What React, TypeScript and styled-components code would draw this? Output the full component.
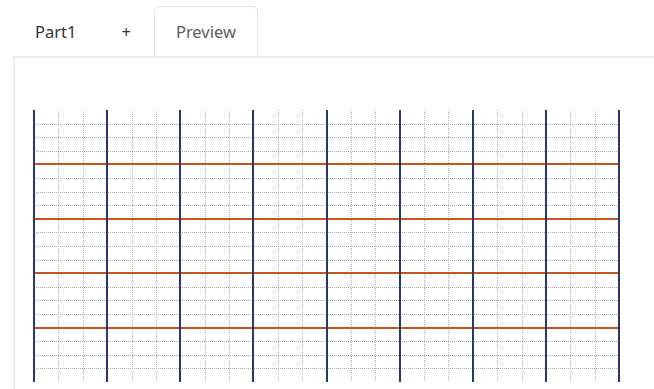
import React from "react";
import styled, { createGlobalStyle } from "styled-components";

const Global = createGlobalStyle`
  html, body { margin: 0; padding: 0; background: #ffffff; }
  body { font-family: "Noto Sans", "Open Sans", Arial, sans-serif; overflow: hidden; }
`;

const Page = styled.div`
  width: 654px;
  height: 389px;
  overflow: hidden;
  background: #fff;
`;

const TabBar = styled.div`
  display: flex;
  align-items: flex-end;
  padding: 6px 0 0 13px;
  height: 56px;
  box-sizing: border-box;
`;

const Tab = styled.div<{ $active?: boolean; $pad: number }>`
  height: 50px;
  box-sizing: border-box;
  display: flex;
  align-items: center;
  padding: 0 ${(p) => p.$pad}px;
  font-size: 16.5px;
  color: ${(p) => (p.$active ? "#5c5c5c" : "#333333")};
  border: 1px solid ${(p) => (p.$active ? "#e3e3e3" : "transparent")};
  border-bottom: none;
  border-radius: 6px 6px 0 0;
  background: #fff;
`;

const Panel = styled.div`
  margin-left: 13px;
  border-top: 2px solid #ececec;
  border-left: 2px solid #ececec;
  padding: 51px 0 0 18px;
  height: 340px;
  box-sizing: border-box;
`;

const COLS = 24;
const ROWS = 20;
const CW = 585 / COLS;
const RH = 272 / ROWS;

function Grid() {
  const ox = 1;
  const oy = 1;
  const w = COLS * CW;
  const h = ROWS * RH;
  const hDots: React.ReactNode[] = [];
  const hMajor: React.ReactNode[] = [];
  for (let k = 1; k < ROWS; k++) {
    const y = oy + k * RH;
    if (k % 4 === 0) {
      hMajor.push(
        <line key={"hm" + k} x1={ox} x2={ox + w} y1={y} y2={y} stroke="#c2561d" strokeWidth={2} />
      );
    } else {
      hDots.push(
        <line key={"hd" + k} x1={ox} x2={ox + w} y1={Math.round(y) + 0.5} y2={Math.round(y) + 0.5} stroke="#a8a8a8" strokeWidth={1} strokeDasharray="1 1" />
      );
    }
  }
  const vDots: React.ReactNode[] = [];
  const vMajor: React.ReactNode[] = [];
  for (let k = 0; k <= COLS; k++) {
    const x = ox + k * CW;
    if (k % 3 === 0) {
      vMajor.push(
        <line key={"vm" + k} x1={x} x2={x} y1={oy} y2={oy + h} stroke="#2b3866" strokeWidth={2} />
      );
    } else {
      vDots.push(
        <line key={"vd" + k} x1={Math.round(x) + 0.5} x2={Math.round(x) + 0.5} y1={oy} y2={oy + h} stroke="#b4b4b4" strokeWidth={1} strokeDasharray="1 1" />
      );
    }
  }
  return (
    <svg width={590} height={276} shapeRendering="crispEdges" style={{ display: "block" }}>
      {hDots}
      {vDots}
      {hMajor}
      {vMajor}
    </svg>
  );
}

export default function App() {
  return (
    <Page>
      <Global />
      <TabBar>
        <Tab $pad={21}>Part1</Tab>
        <Tab $pad={22}>+</Tab>
        <Tab $pad={21} $active>
          Preview
        </Tab>
      </TabBar>
      <Panel>
        <Grid />
      </Panel>
    </Page>
  );
}
